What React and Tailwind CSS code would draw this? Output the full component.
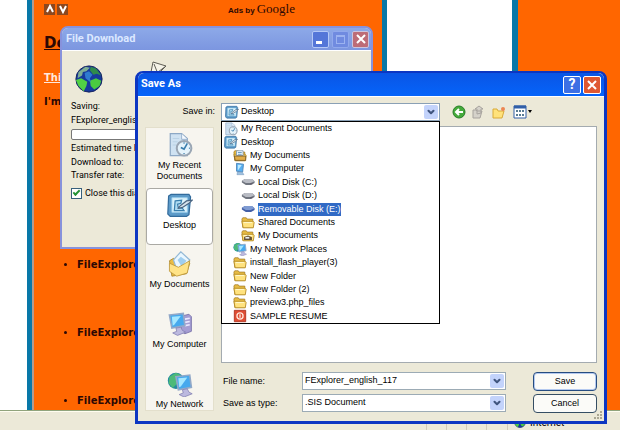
import { ChevronDown } from 'lucide-react'

const PLACES = [
  { label: 'My Recent Documents', icon: 'recent' },
  { label: 'Desktop', icon: 'desktop', active: true },
  { label: 'My Documents', icon: 'documents' },
  { label: 'My Computer', icon: 'computer' },
  { label: 'My Network', icon: 'network' },
]

const LOCATIONS = [
  { label: 'My Recent Documents', icon: 'recent', level: 0 },
  { label: 'Desktop', icon: 'desktop', level: 0 },
  { label: 'My Documents', icon: 'documentsSmall', level: 1 },
  { label: 'My Computer', icon: 'computerSmall', level: 1 },
  { label: 'Local Disk (C:)', icon: 'disk', level: 2 },
  { label: 'Local Disk (D:)', icon: 'disk', level: 2 },
  { label: 'Removable Disk (E:)', icon: 'diskBlue', level: 2, selected: true },
  { label: 'Shared Documents', icon: 'folder', level: 2 },
  { label: 'My Documents', icon: 'folderDark', level: 2 },
  { label: 'My Network Places', icon: 'network', level: 1 },
  { label: 'install_flash_player(3)', icon: 'folder', level: 1 },
  { label: 'New Folder', icon: 'folder', level: 1 },
  { label: 'New Folder (2)', icon: 'folder', level: 1 },
  { label: 'preview3.php_files', icon: 'folder', level: 1 },
  { label: 'SAMPLE RESUME', icon: 'resume', level: 1 },
]

const INDENT = ['pl-0.5', 'pl-[11px]', 'pl-[19px]']

const folderShape = (
  <>
    <path d="M2 7l2-3h8l2 3h13v19H4z" fill="#e8bd45" stroke="#997018" strokeWidth="1.5" />
    <path d="M2 12h26l2 3-2 12H5z" fill="#ffe27e" stroke="#b58a25" strokeWidth="2" />
    <path d="M6 15h19" stroke="#fffbd8" strokeWidth="2" />
  </>
)

const screenShape = (
  <>
    <path d="M3 5l17-2 2 15-16 3z" fill="#46a9ee" stroke="#92a8c8" strokeWidth="2" />
    <path d="M6 7l11-1-8 11-2 1z" fill="#a5e7ff" />
    <path d="M11 21l6-1 2 4 4 2-10 4-6-3 5-2z" fill="#bcb9df" stroke="#8582b4" />
  </>
)

const SHAPES = {
  recent: (
    <>
      <path d="M4 2h14l7 6v21H4z" fill="#cfe2f2" stroke="#8da8c5" strokeWidth="1.5" />
      <path d="M18 2v7h7" fill="#f5faff" stroke="#8da8c5" />
      <path d="M7 8h8M7 12h6M7 16h4" stroke="#b5cee1" />
      <circle cx="21" cy="20" r="9" fill="#e5f3fb" stroke="#9aa6b4" strokeWidth="2.5" />
      <path d="M25 14l-4 7-4-2M21 13v1M21 26v1M28 20h-1" stroke="#397dac" strokeWidth="2" fill="none" />
    </>
  ),
  desktop: (
    <>
      <path d="M2 5l3-2h22l2 3-2 22-3 2H4l-3-3z" fill="#5c9ac8" stroke="#326b9c" strokeWidth="1.5" />
      <path d="M6 7h19v18H6z" fill="#dcf3fc" stroke="#9bd0ed" />
      <path d="M10 11l8-1-1 4-4 1 1 5h5l2 3H9z" fill="#aedbf1" stroke="#397fae" strokeWidth="1.5" />
      <path d="M15 18l9-7 7-1-4 4-8 5-5 1z" fill="#d7e4ec" stroke="#4a6582" strokeWidth="1.5" />
    </>
  ),
  documents: (
    <>
      <path d="M3 12l5-3 3 3 14-2 3 5-4 13-18 3z" fill="#e9bc45" stroke="#a98329" />
      <path d="M8 11l9-10 11 10-7 11-9 1z" fill="#eaf7ff" stroke="#94b9d6" strokeWidth="1.5" />
      <path d="M13 11l4-4 7 5-6 7z" fill="#9fcef0" />
      <path d="M3 15l11 5 14-8-3 15-13 4-9-6z" fill="#ffe387" stroke="#bb963a" />
    </>
  ),
  documentsSmall: (
    <>
      {folderShape}
      <path d="M8 4h15v11H8z" fill="#f8fcff" stroke="#849db3" strokeWidth="2" />
      <path d="M11 8h9M11 12h9" stroke="#5792bd" strokeWidth="2" />
      <path d="M3 16h26v10H5z" fill="#e1ad49" stroke="#795a27" strokeWidth="2" />
    </>
  ),
  computer: (
    <>
      <path d="M19 6l8-2 3 3v18l-8 3-5-3z" fill="#a59dd3" stroke="#716aa5" />
      <path d="M22 10l6-1M22 14l6-1M22 18l6-1" stroke="#ebe9ff" strokeWidth="2" />
      {screenShape}
    </>
  ),
  computerSmall: (
    <>
      <path d="M8 3l16 2-2 18-14-2z" fill="#58aff0" stroke="#4d86b9" strokeWidth="2" />
      <path d="M11 6l9 1-8 11h-1z" fill="#bdeaff" />
      <path d="M10 23l12 1 3 5H9z" fill="#9ec2e2" stroke="#6d8db1" />
    </>
  ),
  network: (
    <>
      <circle cx="11" cy="12" r="10" fill="#258ba1" />
      <path d="M3 7l8-5 6 3-5 3 2 6-7 7-5-6z" fill="#4dba79" />
      <g transform="translate(8 2)">{screenShape}</g>
    </>
  ),
  disk: (
    <>
      <path d="M2 13l7-4h16l6 5v4l-8 5H11l-9-6z" fill="#70757f" />
      <path d="M2 13l7-4h16l6 5-9 4H11z" fill="#b9bcc4" />
      <path d="M21 20h5" stroke="#5a5060" strokeWidth="2" />
    </>
  ),
  diskBlue: (
    <>
      <path d="M2 13l7-4h16l6 5v4l-8 5H11l-9-6z" fill="#435fa6" />
      <path d="M2 13l7-4h16l6 5-9 4H11z" fill="#7f9bd2" />
    </>
  ),
  folder: folderShape,
  folderDark: (
    <>
      {folderShape}
      <path d="M7 18l9-3 9 4v6H7z" fill="#655137" />
      <path d="M10 18h9v4h-9z" fill="#e7eff5" />
    </>
  ),
  resume: (
    <>
      <path d="M3 3h26v26H3z" fill="#df4d34" stroke="#ae321f" strokeWidth="2" />
      <circle cx="16" cy="16" r="7" fill="none" stroke="#ffe8dc" strokeWidth="3" />
      <path d="M16 12v8" stroke="#ffe8dc" strokeWidth="3" />
    </>
  ),
}

function Icon({ name, className }) {
  return (
    <svg viewBox="0 0 32 32" className={className} aria-hidden="true">
      {SHAPES[name]}
    </svg>
  )
}

function Globe({ className }) {
  return (
    <svg viewBox="0 0 32 32" className={className} aria-hidden="true">
      <circle cx="16" cy="16" r="15" fill="#173a9c" stroke="#101c58" />
      <path d="M4 8l8-6 5 1-4 4-4 1-1 4-5 3z" fill="#7fae94" />
      <path d="M18 2l6 2 6 8-5-2-4 1-4-5z" fill="#2f8b4c" />
      <path d="M1 17l6-2 7 4-1 5-3 6-6-6z" fill="#52d044" />
      <path d="M17 18l7-3 6 3-2 6-6 4-4-4z" fill="#4aca40" />
      <path d="M11 9l5-2 4 4-3 4 1 5-6-5z" fill="#2f7bd0" />
    </svg>
  )
}

function DropArrow() {
  return (
    <span className="pointer-events-none flex h-full w-3.5 items-center justify-center rounded-xs bg-[#c3d3fb]">
      <ChevronDown className="size-2.5 text-[#40557e]" strokeWidth={5} />
    </span>
  )
}

function BrowserPage() {
  return (
    <div className="flex min-h-0 flex-1 bg-white pl-[27px]">
      <main className="w-[360px] shrink-0 border-x-[5px] border-[#0878a8] bg-[#ff6600] font-['DejaVu_Sans',sans-serif] text-[#2c0804]">
        <div className="h-full border-l-2 border-[#b39b91] pl-2.5">
          <div className="flex h-[18px] items-center">
            <div className="flex w-[184px] gap-0.5">
              <button type="button" aria-label="Previous ads" className="flex size-[11px] items-center justify-center bg-[#8c481f] text-white">
                <svg viewBox="0 0 10 10" className="size-2.5" fill="none" stroke="currentColor" strokeWidth="2"><path d="M2 8l3-6 3 6" /></svg>
              </button>
              <button type="button" aria-label="Next ads" className="flex size-[11px] items-center justify-center bg-[#8c481f] text-white">
                <svg viewBox="0 0 10 10" className="size-2.5" fill="none" stroke="currentColor" strokeWidth="2"><path d="M2 2l3 6 3-6" /></svg>
              </button>
            </div>
            <a href="#ads" className="flex items-baseline gap-0.5 font-['Liberation_Sans',sans-serif] text-[8px] font-bold whitespace-nowrap">
              Ads by <span className="font-['Liberation_Serif',serif] text-[13px] font-normal">Google</span>
            </a>
          </div>
          <h1 className="mt-4 h-[18px] text-[15px] leading-[18px] font-bold underline">Download</h1>
          <a href="#this" className="mt-[18px] block h-4 text-[10px] leading-4 font-bold text-[#ffe9dd] underline">This</a>
          <p className="mt-2 text-[10px] leading-4 font-bold">I&apos;m</p>
          <ul className="mt-[147px] list-disc space-y-[52px] pl-[33px] text-[10px] leading-4 font-bold">
            <li>FileExplorer</li>
            <li>FileExplorer</li>
            <li>FileExplorer</li>
          </ul>
        </div>
      </main>
      <div className="w-[125px] shrink-0" />
      <aside className="flex-1 border-l-[6px] border-[#0878a8] bg-[#ff6600]" />
    </div>
  )
}

function StatusBar() {
  return (
    <footer className="flex h-5 shrink-0 items-end justify-end border-t border-[#91a47d] bg-[#ece9d8] shadow-[inset_0_1px_0_#fffdf0]">
      <div className="flex h-full divide-x divide-[#d1ccba] border-x border-[#d1ccba]">
        <span className="w-5" />
        <span className="w-5" />
        <span className="w-5" />
        <span className="w-5" />
      </div>
      <div className="flex h-4 w-[112px] items-center gap-1 pl-1.5 text-[10px]">
        <Globe className="size-3" />
        Internet
      </div>
    </footer>
  )
}

function FileDownload() {
  return (
    <section aria-label="File Download" className="absolute top-[26px] left-[60px] w-[313px] rounded-t-lg border-2 border-[#8792dc] bg-[#ece9d8]">
      <header className="flex h-[22px] items-center gap-[3px] rounded-t-md bg-linear-to-b from-[#8da9e8] to-[#7c96e0] pr-0.5 pl-1">
        <h2 className="flex-1 text-[11px] font-bold text-[#dce8ff]">File Download</h2>
        <button type="button" aria-label="Minimize" className="flex size-[17px] items-end rounded-xs border border-[#b5c9f6] bg-[#5476d8] p-[3px]">
          <span className="h-[3px] w-1.5 bg-white" />
        </button>
        <button type="button" aria-label="Maximize" disabled className="size-[17px] rounded-xs border border-[#91a9ec] bg-[#708be0] p-[3px]">
          <span className="block size-full border border-t-2 border-[#9cb3f0]" />
        </button>
        <button type="button" aria-label="Close" className="flex size-[17px] items-center justify-center rounded-xs border border-[#cbc5de] bg-[#bd6c77] text-white">
          <svg viewBox="0 0 10 10" className="size-2.5" stroke="currentColor" strokeWidth="2"><path d="M1 1l8 8M9 1L1 9" /></svg>
        </button>
      </header>
      <div className="h-[197px] border-t border-white pt-3.5 pl-[9px] text-[9px] leading-[14px] whitespace-nowrap">
        <div className="flex h-[34px] gap-11 pl-1">
          <Globe className="size-7" />
          <svg viewBox="0 0 24 30" className="-mt-1 h-[30px] w-6" fill="#f5f3e8" stroke="#5f5e56"><path d="M6 1l13 4-8 8-4 5-4-2zM7 3l4 10M19 5l-8 6" /></svg>
        </div>
        <p>Saving:</p>
        <p>FExplorer_english_117.SIS</p>
        <div className="my-0.5 mr-3 h-[11px] rounded-xs border border-[#777] bg-white" />
        <p className="leading-[13px]">Estimated time left:</p>
        <p>Download to:</p>
        <p className="leading-[13px]">Transfer rate:</p>
        <label className="mt-1 flex items-center gap-[3px]">
          <input
            type="checkbox"
            defaultChecked
            className="size-[11px] appearance-none border border-[#38607c] bg-white checked:before:block checked:before:h-[4px] checked:before:w-[7px] checked:before:translate-x-px checked:before:translate-y-px checked:before:-rotate-45 checked:before:border-b-2 checked:before:border-l-2 checked:before:border-[#249335]"
          />
          Close this dialog box when download completes
        </label>
      </div>
    </section>
  )
}

function PlacesBar() {
  return (
    <nav aria-label="Places" className="mt-1.5 flex h-[284px] w-[69px] shrink-0 flex-col border border-[#e3dfcc] bg-[#f7f5ef]">
      {PLACES.map((place) => (
        <button
          key={place.label}
          type="button"
          className={
            place.active
              ? 'mb-0.5 flex h-[57px] shrink-0 flex-col items-center rounded-sm border border-[#aaa9a4] bg-white pt-[3px] leading-[11px]'
              : 'flex h-[60px] shrink-0 flex-col items-center pt-1 leading-[11px] last:h-[43px]'
          }
        >
          <Icon name={place.icon} className="mb-0.5 size-[26px] shrink-0" />
          {place.label}
        </button>
      ))}
    </nav>
  )
}

function LocationPicker() {
  return (
    <div className="relative h-[18px] w-[219px]">
      <select id="save-in" className="block size-full appearance-none border border-[#8aa0b5] bg-white pl-[19px]">
        <option>Desktop</option>
      </select>
      <Icon name="desktop" className="pointer-events-none absolute top-0.5 left-1 size-3.5" />
      <div className="absolute top-0.5 right-0.5 h-3.5">
        <DropArrow />
      </div>
      <ul role="listbox" aria-label="Locations" className="absolute top-full left-0 z-10 flex h-[203px] w-full flex-col border border-black bg-white">
        {LOCATIONS.map((item, index) => (
          <li key={index} role="option" aria-selected={!!item.selected} className={`flex min-h-0 flex-1 items-center gap-[3px] leading-[13px] ${INDENT[item.level]}`}>
            <Icon name={item.icon} className="size-3.5" />
            <span className={item.selected ? 'bg-[#316ac5] text-white' : ''}>{item.label}</span>
          </li>
        ))}
      </ul>
    </div>
  )
}

function Toolbar() {
  return (
    <div className="flex items-center gap-[5px] pl-3">
      <button type="button" aria-label="Back">
        <svg viewBox="0 0 14 14" className="size-3.5"><circle cx="7" cy="7" r="6" fill="#45aa3b" stroke="#267d27" /><path d="M11 7H4M7 4L4 7l3 3" fill="none" stroke="#fff" strokeWidth="2" /></svg>
      </button>
      <button type="button" aria-label="Up one level">
        <svg viewBox="0 0 14 14" className="size-3.5" fill="#d5d2ca" stroke="#a7a39e"><path d="M2 5h3l1 1h5l-2 7H2zM6 9V4H4l4-3 4 3h-2v4z" /></svg>
      </button>
      <button type="button" aria-label="New folder" className="ml-0.5">
        <svg viewBox="0 0 14 14" className="size-3.5"><path d="M1 4h4l1 2h6l-2 7H1z" fill="#ffe27b" stroke="#d9aa39" /><circle cx="11" cy="4" r="2" fill="#ed8652" /></svg>
      </button>
      <button type="button" aria-label="View menu" className="ml-0.5">
        <svg viewBox="0 0 20 14" className="h-3.5 w-5"><path d="M1 1h12v12H1z" fill="#fff" stroke="#315fa8" /><path d="M1 2h12" stroke="#315fa8" strokeWidth="3" /><path d="M3 6h8M3 10h8" stroke="#587b93" strokeWidth="2" strokeDasharray="2 1" /><path d="M15 5h4l-2 3z" /></svg>
      </button>
    </div>
  )
}

function SaveAs() {
  return (
    <section aria-label="Save As" className="absolute top-[71px] right-[13px] left-[135px] rounded-t-lg border-[3px] border-t-2 border-[#0c36c2] bg-[#ece9d8]">
      <header className="flex h-[23px] items-center gap-0.5 rounded-t-md bg-linear-to-b from-[#0a55e5] to-[#0564fa] pr-[3px] pl-[3px]">
        <h2 className="flex-1 text-[11px] font-bold text-white">Save As</h2>
        <button type="button" aria-label="Help" className="flex size-[18px] items-center justify-center rounded-xs border border-white bg-[#3d70e4] text-[14px] font-bold text-white">?</button>
        <button type="button" aria-label="Close" className="flex size-[18px] items-center justify-center rounded-xs border border-white bg-[#df5832] text-white">
          <svg viewBox="0 0 10 10" className="size-2.5" stroke="currentColor" strokeWidth="2"><path d="M1 1l8 8M9 1L1 9" /></svg>
        </button>
      </header>
      <form
        className="relative border-t border-white px-[7px] pt-1.5 pb-2 font-['Liberation_Sans',sans-serif] text-[9px]"
        onSubmit={(e) => e.preventDefault()}
      >
        <div className="flex h-[18px] items-center">
          <label htmlFor="save-in" className="w-[76px] pr-1.5 text-right">Save in:</label>
          <LocationPicker />
          <Toolbar />
        </div>
        <div className="flex gap-[7px]">
          <PlacesBar />
          <div className="mt-[5px] flex min-w-0 flex-1 flex-col gap-[9px]">
            <div className="h-[237px] border border-[#a4abb0] bg-white" />
            <div className="grid grid-cols-[79px_1fr_64px] gap-x-0.5 gap-y-[3px]">
              <label htmlFor="file-name" className="flex items-center pl-0.5">File name:</label>
              <div className="mr-[25px] flex h-[18px] border border-[#9cabb5] bg-white p-px">
                <input id="file-name" type="text" defaultValue="FExplorer_english_117" className="min-w-0 flex-1 pl-px outline-none" />
                <DropArrow />
              </div>
              <button type="submit" className="h-[19px] rounded-sm border border-[#264c80] bg-[#fbfbf8] shadow-[inset_0_0_0_1px_#b4c9ef]">Save</button>
              <label htmlFor="save-type" className="flex items-center pl-0.5">Save as type:</label>
              <div className="relative mr-[25px] h-[18px]">
                <select id="save-type" className="block size-full appearance-none border border-[#9cabb5] bg-white pl-0.5">
                  <option>.SIS Document</option>
                </select>
                <div className="absolute top-0.5 right-0.5 h-3.5">
                  <DropArrow />
                </div>
              </div>
              <button type="button" className="h-[19px] rounded-sm border border-[#354e63] bg-[#fbfbf8]">Cancel</button>
            </div>
          </div>
        </div>
        <svg viewBox="0 0 9 9" className="absolute right-0.5 bottom-0.5 size-[9px]" fill="#aaa793"><path d="M7 1h2v2H7zM4 4h2v2H4zM7 4h2v2H7zM1 7h2v2H1zM4 7h2v2H4zM7 7h2v2H7z" /></svg>
      </form>
    </section>
  )
}

export default function App() {
  return (
    <div className="relative flex h-screen flex-col overflow-hidden font-[Roboto,sans-serif] text-black">
      <BrowserPage />
      <StatusBar />
      <FileDownload />
      <SaveAs />
    </div>
  )
}
